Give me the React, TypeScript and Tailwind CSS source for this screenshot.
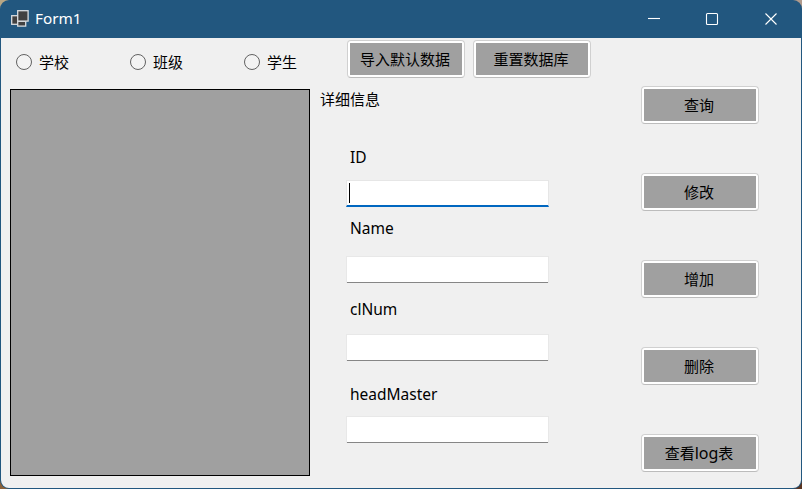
import React from "react";

function Button({ children }: { children: React.ReactNode }) {
  return (
    <button className="h-[38px] w-[118px] shrink-0 rounded-[4px] border border-[#d0d0d0] border-b-[#bcbcbc] bg-white p-[2px]">
      <span className="flex h-full w-full items-center justify-center whitespace-nowrap bg-[#a0a0a0] pr-[2px] leading-[20px]">
        {children}
      </span>
    </button>
  );
}

function Radio({ label }: { label: string }) {
  return (
    <label className="flex h-4 w-[114px] shrink-0 items-center gap-[7px]">
      <span className="size-4 shrink-0 rounded-full border border-[#626262] bg-[#f3f3f3]" />
      <span className="leading-[20px]">{label}</span>
    </label>
  );
}

function Field({ label, className, focused }: { label: string; className: string; focused?: boolean }) {
  return (
    <div className={`flex flex-col justify-between ${className}`}>
      <label className="ml-1 text-[15.5px] leading-[20px]">{label}</label>
      {focused ? (
        <div className="h-[27px] w-[203px] border border-b-2 border-[#e6e6e6] border-b-[#0067c0] bg-white pl-[2px] pt-[2px]">
          <div className="h-5 w-px bg-black" />
        </div>
      ) : (
        <div className="h-[27px] w-[203px] border-x border-t border-[#e8e8e8]">
          <div className="h-full border-b border-[#868686] bg-white" />
        </div>
      )}
    </div>
  );
}

export default function App() {
  return (
    <div className="h-[489px] w-[802px] bg-[conic-gradient(#b09a8c_25%,#5a3522_25%_50%,#8a6038_50%_75%,#b8a684_75%)] font-['Noto_Sans','Noto_Sans_CJK_SC',sans-serif] text-[15px] text-black">
      <div className="flex h-full flex-col overflow-hidden rounded-[9px] bg-[#22577f]">
        <header className="flex h-[38px] shrink-0 items-center pl-[11px] text-white">
          <svg width="18" height="17" viewBox="0 0 18 17" className="-mt-px" fill="#414141" stroke="#d9dde0" strokeWidth="1.3">
            <rect x="0.7" y="5.7" width="7" height="8.6" />
            <rect x="6.7" y="11.3" width="8" height="4.8" />
            <rect x="6.7" y="0.7" width="10.4" height="10.4" />
          </svg>
          <span className="-mt-[2px] ml-[6px] flex-1 text-[15.3px] leading-[20px]">Form1</span>
          <svg width="131" height="14" viewBox="0 0 131 14" className="mr-[24px]" fill="none" stroke="white" strokeWidth="1.1">
            <path d="M1 6.5h12" />
            <rect x="59.5" y="1.5" width="11" height="11" rx="1" />
            <path d="m118.5 1.5 11 11m0-11-11 11" />
          </svg>
        </header>
        <main className="mx-px mb-px flex flex-1 rounded-b-[8px] bg-[#f0f0f0]">
          <section className="flex w-[640px] flex-col pl-[9px]">
            <div className="flex h-[51px] pt-[2px]">
              <div className="flex w-[337px] pl-[6px] pt-[14px]">
                <Radio label="学校" />
                <Radio label="班级" />
                <Radio label="学生" />
              </div>
              <div className="flex gap-2">
                <Button>导入默认数据</Button>
                <Button>重置数据库</Button>
              </div>
            </div>
            <div className="flex">
              <div className="h-[387px] w-[300px] border border-black bg-[#a0a0a0]" />
              <div className="ml-[10px] flex flex-col">
                <h2 className="h-5 leading-[20px]">详细信息</h2>
                <div className="ml-[26px] mt-[38px] flex flex-col">
                  <Field label="ID" className="h-[60px]" focused />
                  <Field label="Name" className="mt-[11px] h-[65px]" />
                  <Field label="clNum" className="mt-[16px] h-[62px]" />
                  <Field label="headMaster" className="mt-[23px] h-[59px]" />
                </div>
              </div>
            </div>
          </section>
          <aside className="flex flex-col gap-[49px] pt-[48px]">
            <Button>查询</Button>
            <Button>修改</Button>
            <Button>增加</Button>
            <Button>删除</Button>
            <Button>
              查看<span className="text-[16px]">log</span>表
            </Button>
          </aside>
        </main>
      </div>
    </div>
  );
}
